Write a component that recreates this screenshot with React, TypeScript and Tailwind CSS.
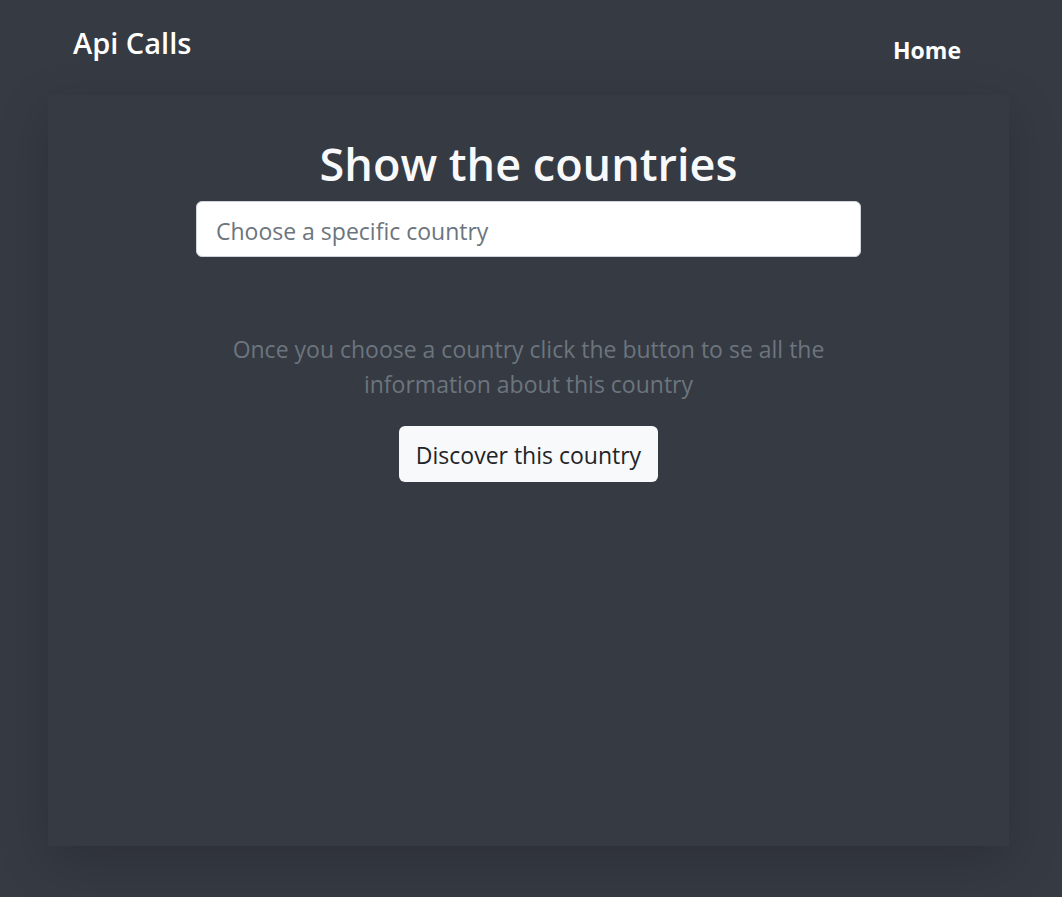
import React, { useState } from 'react';

export default function App() {
  const [country, setCountry] = useState('');

  return (
    <div className="min-h-[897px] bg-[#363a42] text-white font-['Segoe_UI','Open_Sans',sans-serif]">
      <header className="ml-[48px] flex h-[95px] w-[961px] items-start justify-between">
        <a href="#" className="ml-[25px] mt-[24px] text-[29px] font-semibold leading-[38px] text-white">
          Api Calls
        </a>
        <nav className="mr-[48px] mt-[34px]">
          <a href="#" className="text-[23px] font-bold leading-[32px] text-white">
            Home
          </a>
        </nav>
      </header>

      <main className="ml-[48px] h-[751px] w-[961px] bg-[#363a43] shadow-[0_16px_48px_rgba(0,0,0,0.175)]">
        <div className="flex flex-col items-center pt-[36px]">
          <h1 className="text-[45px] font-semibold leading-[66px] text-[#f8f9fa]">Show the countries</h1>
          <input
            type="text"
            value={country}
            onChange={(e) => setCountry(e.target.value)}
            placeholder="Choose a specific country"
            className="mt-[4px] h-[56px] w-[665px] rounded-[6px] border border-[#ced4da] bg-white px-[19px] pt-[3px] text-[23px] text-[#212529] outline-none placeholder:text-[#6c757d]"
          />
          <p className="mt-[75px] w-[620px] text-center text-[23px] leading-[35px] text-[#6c757d]">
            Once you choose a country click the button to se all the information about this country
          </p>
          <button className="mt-[24px] h-[56px] rounded-[6px] bg-[#f8f9fa] px-[17px] pt-[3px] text-[23px] text-[#212529]">
            Discover this country
          </button>
        </div>
      </main>
    </div>
  );
}
